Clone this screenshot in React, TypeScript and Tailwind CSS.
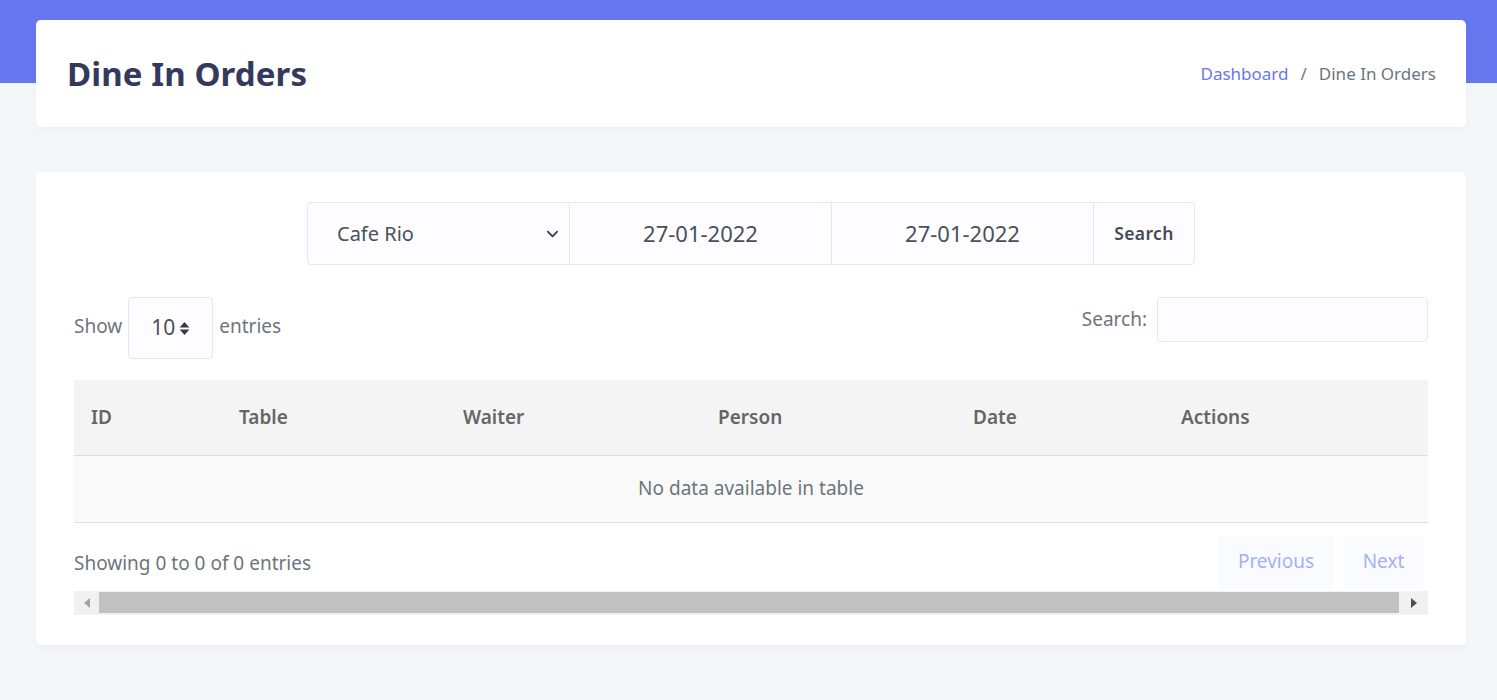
import React from 'react'

const cols = [
  { label: 'ID', w: 'w-[148px]' },
  { label: 'Table', w: 'w-[224px]' },
  { label: 'Waiter', w: 'w-[255px]' },
  { label: 'Person', w: 'w-[255px]' },
  { label: 'Date', w: 'w-[208px]' },
  { label: 'Actions', w: '' },
]

export default function App() {
  return (
    <div className="relative min-h-[700px] bg-[#f4f6f9]" style={{ fontFamily: '"Noto Sans", "Open Sans", sans-serif' }}>
      <div className="absolute inset-x-0 top-0 h-[83px] bg-[#6777ef]" />
      <div className="relative pl-[36px] pr-[31px] pt-[20px]">
        {/* Header */}
        <div className="flex h-[107px] items-center justify-between rounded-[5px] bg-white pl-[31px] pr-[30px] shadow-[0_4px_8px_rgba(0,0,0,0.03)]">
          <h1 className="text-[33px] font-bold text-[#34395e] tracking-[0.1px]">Dine In Orders</h1>
          <div className="flex items-center text-[17px] text-[#6c757d]">
            <span className="text-[#6777ef]">Dashboard</span>
            <span className="px-[12px]">/</span>
            <span>Dine In Orders</span>
          </div>
        </div>

        {/* Main card */}
        <div className="mt-[45px] rounded-[5px] bg-white px-[38px] pt-[30px] pb-[30px] shadow-[0_4px_8px_rgba(0,0,0,0.03)]">
          <div className="flex justify-center">
            <div className="flex h-[63px] rounded-[4px] border border-[#e4e6fc] bg-[#fdfdff] text-[#495057]">
              <div className="flex w-[262px] items-center justify-between border-r border-[#e4e6fc] pl-[29px] pr-[9px] text-[20px]">
                <span>Cafe Rio</span>
                <svg width="15" height="15" viewBox="0 0 16 16" fill="none" stroke="#343a40" strokeWidth="1.8" strokeLinecap="round" strokeLinejoin="round"><path d="M3 6l5 5 5-5" /></svg>
              </div>
              <div className="flex w-[262px] items-center justify-center border-r border-[#e4e6fc] text-[22px]">27-01-2022</div>
              <div className="flex w-[262px] items-center justify-center border-r border-[#e4e6fc] text-[22px]">27-01-2022</div>
              <div className="flex w-[100px] items-center justify-center text-[17.5px] font-semibold tracking-[0.4px] text-[#454a55]">Search</div>
            </div>
          </div>

          <div className="mt-[32px] flex items-start justify-between text-[19px] text-[#6c757d]">
            <div className="flex items-center">
              <span className="-mt-[3px]">Show</span>
              <div className="mx-[6px] flex h-[62px] w-[85px] items-center justify-center rounded-[4px] border border-[#e4e6fc] bg-[#fdfdff] text-[21px] text-[#495057]">
                <span>10</span>
                <svg className="ml-[4px]" width="11" height="15" viewBox="0 0 10 14" fill="#343a40"><path d="M5 1L9.5 6H0.5Z" /><path d="M5 13L9.5 8H0.5Z" /></svg>
              </div>
              <span className="-mt-[3px]">entries</span>
            </div>
            <div className="flex items-center">
              <span className="mr-[10px]">Search:</span>
              <div className="h-[45px] w-[271px] rounded-[4px] border border-[#e4e6fc] bg-[#fdfdff]" />
            </div>
          </div>

          <table className="mt-[21px] w-full border-collapse text-left">
            <thead>
              <tr className="h-[75px] border-b border-[#dddddd] bg-[#f4f4f4]">
                {cols.map((c) => (
                  <th key={c.label} className={`${c.w} px-[17px] text-[19px] font-semibold text-[#666666]`}>{c.label}</th>
                ))}
              </tr>
            </thead>
            <tbody>
              <tr className="h-[67px] border-b border-[#dddddd] bg-[#f9f9f9]">
                <td colSpan={6} className="text-center text-[19px] text-[#6c757d]">No data available in table</td>
              </tr>
            </tbody>
          </table>

          <div className="flex items-center justify-between pt-[13px] pb-[3px]">
            <span className="mt-[4px] text-[19px] text-[#6c757d]">Showing 0 to 0 of 0 entries</span>
            <div className="mr-[4px] flex gap-[9px] text-[19px] text-[#a6aff7]">
              <div className="flex h-[52px] w-[116px] items-center justify-center rounded-[4px] bg-[#fafbff]">Previous</div>
              <div className="flex h-[52px] w-[81px] items-center justify-center rounded-[4px] bg-[#fafbff]">Next</div>
            </div>
          </div>

          {/* Horizontal scrollbar */}
          <div className="flex h-[24px] items-center bg-[#f1f1f1]">
            <div className="flex w-[25px] justify-center">
              <svg width="6" height="10" viewBox="0 0 6 10" fill="#a3a3a3"><path d="M6 0V10L0 5Z" /></svg>
            </div>
            <div className="h-[21px] flex-1 bg-[#c1c1c1]" />
            <div className="flex w-[29px] justify-center">
              <svg width="6" height="10" viewBox="0 0 6 10" fill="#505050"><path d="M0 0V10L6 5Z" /></svg>
            </div>
          </div>
        </div>
      </div>
    </div>
  )
}
